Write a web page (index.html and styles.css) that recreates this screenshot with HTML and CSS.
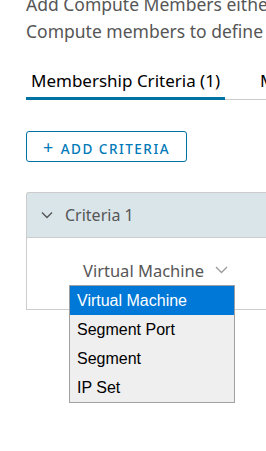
FILE: index.html
```html
<!DOCTYPE html>
<html lang="en">
<head>
    <meta charset="UTF-8">
    <meta name="viewport" content="width=device-width, initial-scale=1.0">
    <title>Add Group - Compute Members</title>
    <link rel="stylesheet" href="styles.css">
</head>
<body>
    <div class="page">
        <p class="intro">Add Compute Members either statically or dynamically. Select<br>Compute members to define this group.</p>

        <div class="tabs">
            <div class="tab active">Membership Criteria (1)</div>
            <div class="tab">Members (0)</div>
        </div>

        <button class="btn-outline">
            <span class="plus">+</span> ADD CRITERIA
        </button>

        <div class="criteria">
            <div class="criteria-head">
                <svg class="chev" width="12" height="8" viewBox="0 0 12 8"><path d="M1 1.5 L6 6.5 L11 1.5" fill="none" stroke="#565656" stroke-width="1.4"/></svg>
                <span>Criteria 1</span>
            </div>
            <div class="criteria-body">
                <div class="select">
                    <span>Virtual Machine</span>
                    <svg class="chev-sel" width="13" height="8" viewBox="0 0 13 8"><path d="M1 1 L6.5 6.5 L12 1" fill="none" stroke="#9a9a9a" stroke-width="1.3"/></svg>
                    <div class="options">
                        <div class="option selected">Virtual Machine</div>
                        <div class="option">Segment Port</div>
                        <div class="option">Segment</div>
                        <div class="option">IP Set</div>
                    </div>
                </div>
            </div>
        </div>
    </div>
</body>
</html>
```

FILE: styles.css
```css
body {
    margin: 0;
    font-family: "Noto Sans", Lato, sans-serif;
    color: #565656;
    background: #fff;
}
.page {
    box-sizing: border-box;
    width: 266px;
    height: 451px;
    padding-left: 26px;
    overflow: hidden;
}
.intro {
    margin: -9px 0 0 0;
    font-size: 17.5px;
    line-height: 27px;
    white-space: nowrap;
}
.tabs {
    display: flex;
    margin-top: 26px;
    border-bottom: 1px solid #ccc;
    width: 300px;
}
.tab {
    font-size: 17px;
    color: #000;
    padding: 0 5px 6px 5px;
    margin-right: 30px;
    white-space: nowrap;
    line-height: 20px;
    border-bottom: 3px solid transparent;
    margin-bottom: -1px;
}
.tab.active {
    border-bottom-color: #0072a3;
}
.btn-outline {
    display: block;
    box-sizing: border-box;
    margin-top: 31px;
    width: 161px;
    height: 31px;
    border: 1px solid #0072a3;
    border-radius: 3px;
    background: #fff;
    color: #0079b8;
    font-family: "Noto Sans", Lato, sans-serif;
    font-size: 13.5px;
    font-weight: 500;
    letter-spacing: 1.5px;
    padding: 0;
    text-align: center;
}
.plus {
    font-weight: 400;
    font-size: 18px;
    margin-right: 1px;
}
.criteria {
    margin-top: 30px;
    width: 300px;
}
.criteria-head {
    box-sizing: border-box;
    height: 46px;
    background: #dae5ea;
    border-top: 1px solid #ccc;
    border-left: 1px solid #ccc;
    border-bottom: 1px solid #ccc;
    border-radius: 3px 0 0 0;
    display: flex;
    align-items: center;
    font-size: 16px;
}
.chev {
    margin-left: 14px;
    margin-right: 12px;
}
.criteria-body {
    box-sizing: border-box;
    height: 72px;
    border-left: 1px solid #ccc;
    border-bottom: 1px solid #ccc;
}
.select {
    position: relative;
    margin-left: 56px;
    padding-top: 22px;
    width: 152px;
    font-size: 16.5px;
    display: flex;
    align-items: center;
    height: 20px;
}
.chev-sel {
    margin-left: 11px;
}
.options {
    position: absolute;
    left: -14px;
    top: 47px;
    box-sizing: border-box;
    width: 166px;
    border: 1px solid #a0a0a0;
    background: #efefef;
    font-family: "Liberation Sans", Arial, sans-serif;
    font-size: 16px;
    color: #000;
}
.option {
    height: 29px;
    line-height: 29px;
    padding-left: 7px;
}
.option.selected {
    background: #0078d7;
    color: #fff;
}
```
